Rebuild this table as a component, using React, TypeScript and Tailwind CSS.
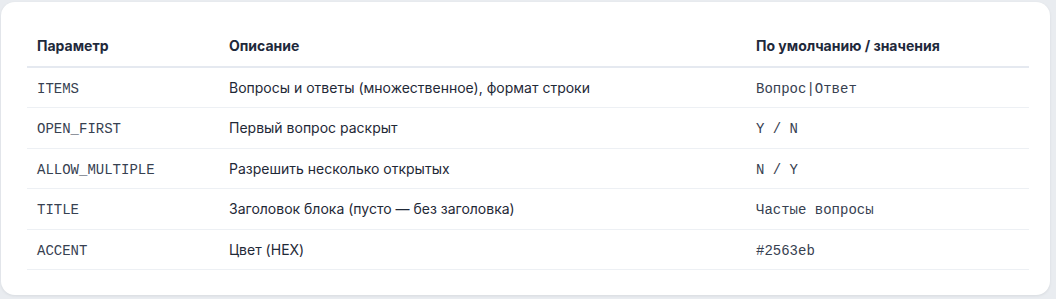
import React from "react";

const rows: [string, string, string][] = [
  ["ITEMS", "Вопросы и ответы (множественное), формат строки", "Вопрос|Ответ"],
  ["OPEN_FIRST", "Первый вопрос раскрыт", "Y / N"],
  ["ALLOW_MULTIPLE", "Разрешить несколько открытых", "N / Y"],
  ["TITLE", "Заголовок блока (пусто — без заголовка)", "Частые вопросы"],
  ["ACCENT", "Цвет (HEX)", "#2563eb"],
];

const mono = "'Courier New', 'Nimbus Mono PS', 'Nimbus Mono L', FreeMono, 'Liberation Mono', monospace";

export default function App() {
  return (
    <div className="w-[1056px] h-[299px] bg-[#e9ecf0] pt-[2px] pl-[1px] overflow-hidden" style={{ fontFamily: "Inter, 'Noto Sans', sans-serif" }}>
      <div className="w-[1049px] h-[293px] bg-white rounded-[14px] shadow-[0_1px_3px_rgba(15,23,42,0.08)] pl-[26px] pt-[24px]">
        <table className="w-[1002px] border-collapse text-[14px] leading-[19.5px]">
          <thead>
            <tr className="border-b-2 border-[#e5e9f0]">
              <th className="w-[192px] text-left font-bold text-[#1e293b] px-[10px] py-[10px]">Параметр</th>
              <th className="w-[527px] text-left font-bold text-[#1e293b] px-[10px] py-[10px]">Описание</th>
              <th className="text-left font-bold text-[#1e293b] px-[10px] py-[10px]">По умолчанию / значения</th>
            </tr>
          </thead>
          <tbody>
            {rows.map(([a, b, c]) => (
              <tr key={a} className="border-b border-[#edf0f4]">
                <td className="px-[10px] py-[10px] text-[#374151]">
                  <code className="text-[14px] leading-none" style={{ fontFamily: mono }}>{a}</code>
                </td>
                <td className="px-[10px] py-[10px] text-[#1f2937]">{b}</td>
                <td className="px-[10px] py-[10px] text-[#374151]">
                  <code className="text-[14px] leading-none" style={{ fontFamily: mono }}>{c}</code>
                </td>
              </tr>
            ))}
          </tbody>
        </table>
      </div>
    </div>
  );
}
